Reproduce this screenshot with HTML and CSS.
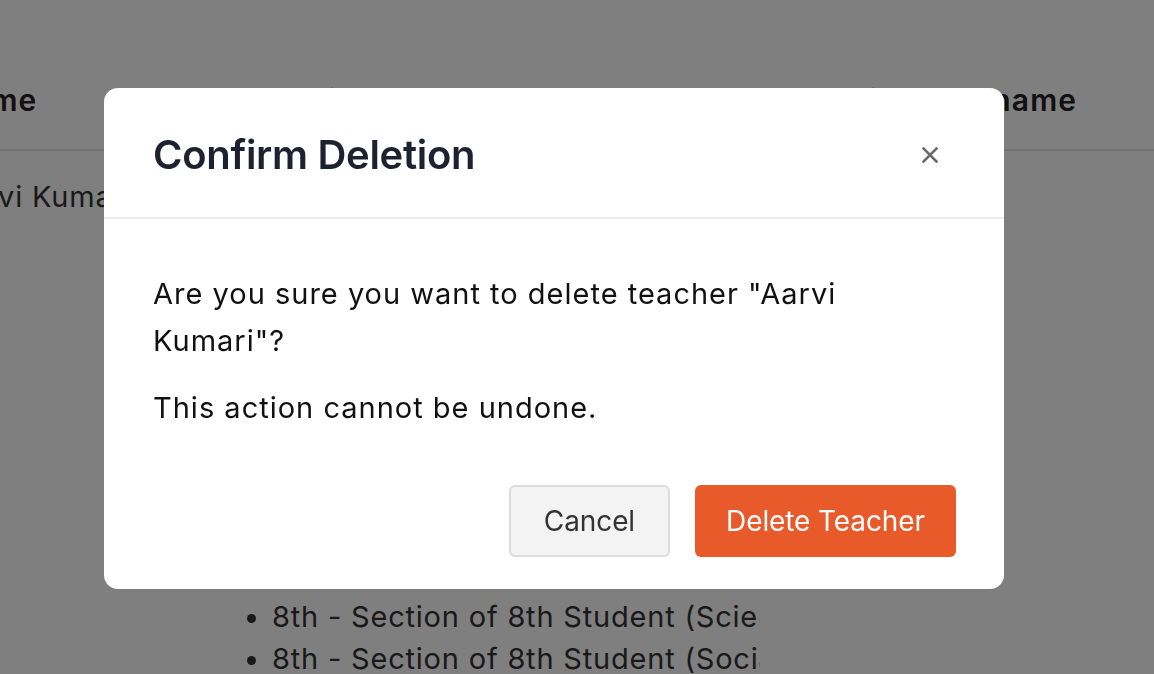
FILE: index.html
```html
<!DOCTYPE html>
<html lang="en">
<head>
<meta charset="utf-8">
<title>Confirm Deletion</title>
<link rel="stylesheet" href="styles.css">
</head>
<body>
<div class="page">
  <div class="table">
    <div class="thead">
      <div class="cell c1">Name</div>
      <div class="cell c2">Assigned Teachers</div>
      <div class="cell c3">Mobile/Username</div>
    </div>
    <div class="trow">
      <div class="cell c1">Aarvi Kumari</div>
      <div class="cell c2">
        <ul class="classes">
          <li>6th - Section of 6th Student (English)</li>
          <li>6th - Section of 6th Student (Maths)</li>
          <li>6th - Section of 6th Student (Science)</li>
          <li>7th - Section of 7th Student (English)</li>
          <li>7th - Section of 7th Student (Maths)</li>
          <li>7th - Section of 7th Student (Science)</li>
          <li>7th - Section of 7th Student (Social)</li>
          <li>8th - Section of 8th Student (English)</li>
          <li>8th - Section of 8th Student (Hindi)</li>
          <li>8th - Section of 8th Student (Maths)</li>
          <li>8th - Section of 8th Student (Science)</li>
          <li>8th - Section of 8th Student (Social Science)</li>
        </ul>
      </div>
      <div class="cell c3">aarvi.kumari</div>
    </div>
  </div>
</div>

<div class="overlay">
  <div class="modal" role="dialog" aria-labelledby="modal-title">
    <div class="modal-header">
      <h2 id="modal-title" class="modal-title">Confirm Deletion</h2>
      <button class="close-btn" aria-label="Close">
        <svg width="16" height="16" viewBox="0 0 16 16" aria-hidden="true">
          <path d="M1.5 1.5 L14.5 14.5 M14.5 1.5 L1.5 14.5" stroke="#6b6b6b" stroke-width="2.6" stroke-linecap="square" fill="none"/>
        </svg>
      </button>
    </div>
    <div class="modal-body">
      <p>Are you sure you want to delete teacher "Aarvi Kumari"?</p>
      <p>This action cannot be undone.</p>
    </div>
    <div class="modal-footer">
      <button class="btn btn-cancel">Cancel</button>
      <button class="btn btn-danger">Delete Teacher</button>
    </div>
  </div>
</div>
</body>
</html>
```

FILE: styles.css
```css
* { box-sizing: border-box; }

html, body {
  margin: 0;
  padding: 0;
  width: 1154px;
  height: 674px;
  overflow: hidden;
  background: #ffffff;
  font-family: "Inter", "Noto Sans", sans-serif;
  color: #333333;
}

.page {
  width: 1154px;
  height: 674px;
  overflow: hidden;
}

.table {
  margin-left: -52px;
  width: 1300px;
}

.thead, .trow {
  display: grid;
  grid-template-columns: 292px 520px 1fr;
}

.thead {
  height: 151px;
  align-items: center;
  padding-top: 50px;
  border-bottom: 2px solid #e4e4e4;
  font-weight: 600;
  font-size: 30px;
  letter-spacing: 1.2px;
  color: #222222;
}

.thead .cell { line-height: 1; }

.trow {
  font-size: 29px;
  letter-spacing: 0.8px;
  color: #333333;
  padding-top: 25px;
  line-height: 42px;
}

.cell.c1 { padding-left: 0; white-space: nowrap; }
.cell.c2 { padding-left: 30px; overflow: hidden; white-space: nowrap; }
.cell.c3 { padding-left: 41px; white-space: nowrap; }

.classes {
  margin: 0;
  padding: 0 0 0 2px;
  list-style: disc outside;
}

.overlay {
  position: fixed;
  inset: 0;
  background: rgba(0, 0, 0, 0.5);
  display: flex;
  align-items: flex-start;
  justify-content: flex-start;
  padding: 88px 0 0 104px;
}

.modal {
  width: 900px;
  background: #ffffff;
  border-radius: 14px;
  overflow: hidden;
}

.modal-header {
  height: 131px;
  display: flex;
  align-items: center;
  justify-content: space-between;
  padding: 4px 66px 0 49px;
  border-bottom: 2px solid #ececec;
}

.modal-title {
  margin: 0;
  font-size: 40px;
  font-weight: 600;
  color: #1e2230;
  letter-spacing: -0.3px;
}

.close-btn {
  border: 0;
  background: transparent;
  padding: 0;
  width: 16px;
  height: 16px;
  display: flex;
  cursor: pointer;
}

.modal-body {
  padding: 51px 60px 0 49px;
  font-size: 29px;
  letter-spacing: 1px;
  line-height: 47px;
  color: #111111;
}

.modal-body p {
  margin: 0 0 20px 0;
}

.modal-body p:last-child { margin-bottom: 0; }

.modal-footer {
  display: flex;
  justify-content: flex-end;
  gap: 25px;
  padding: 54px 48px 32px 48px;
}

.btn {
  height: 72px;
  border-radius: 6px;
  font-family: inherit;
  font-size: 28px;
  letter-spacing: -0.1px;
  cursor: pointer;
}

.btn-cancel {
  background: #f3f3f3;
  border: 2px solid #dcdcdc;
  color: #333333;
  padding: 0 33px;
}

.btn-danger {
  background: #e95a2b;
  border: 0;
  color: #ffffff;
  padding: 0 31px;
}
```
